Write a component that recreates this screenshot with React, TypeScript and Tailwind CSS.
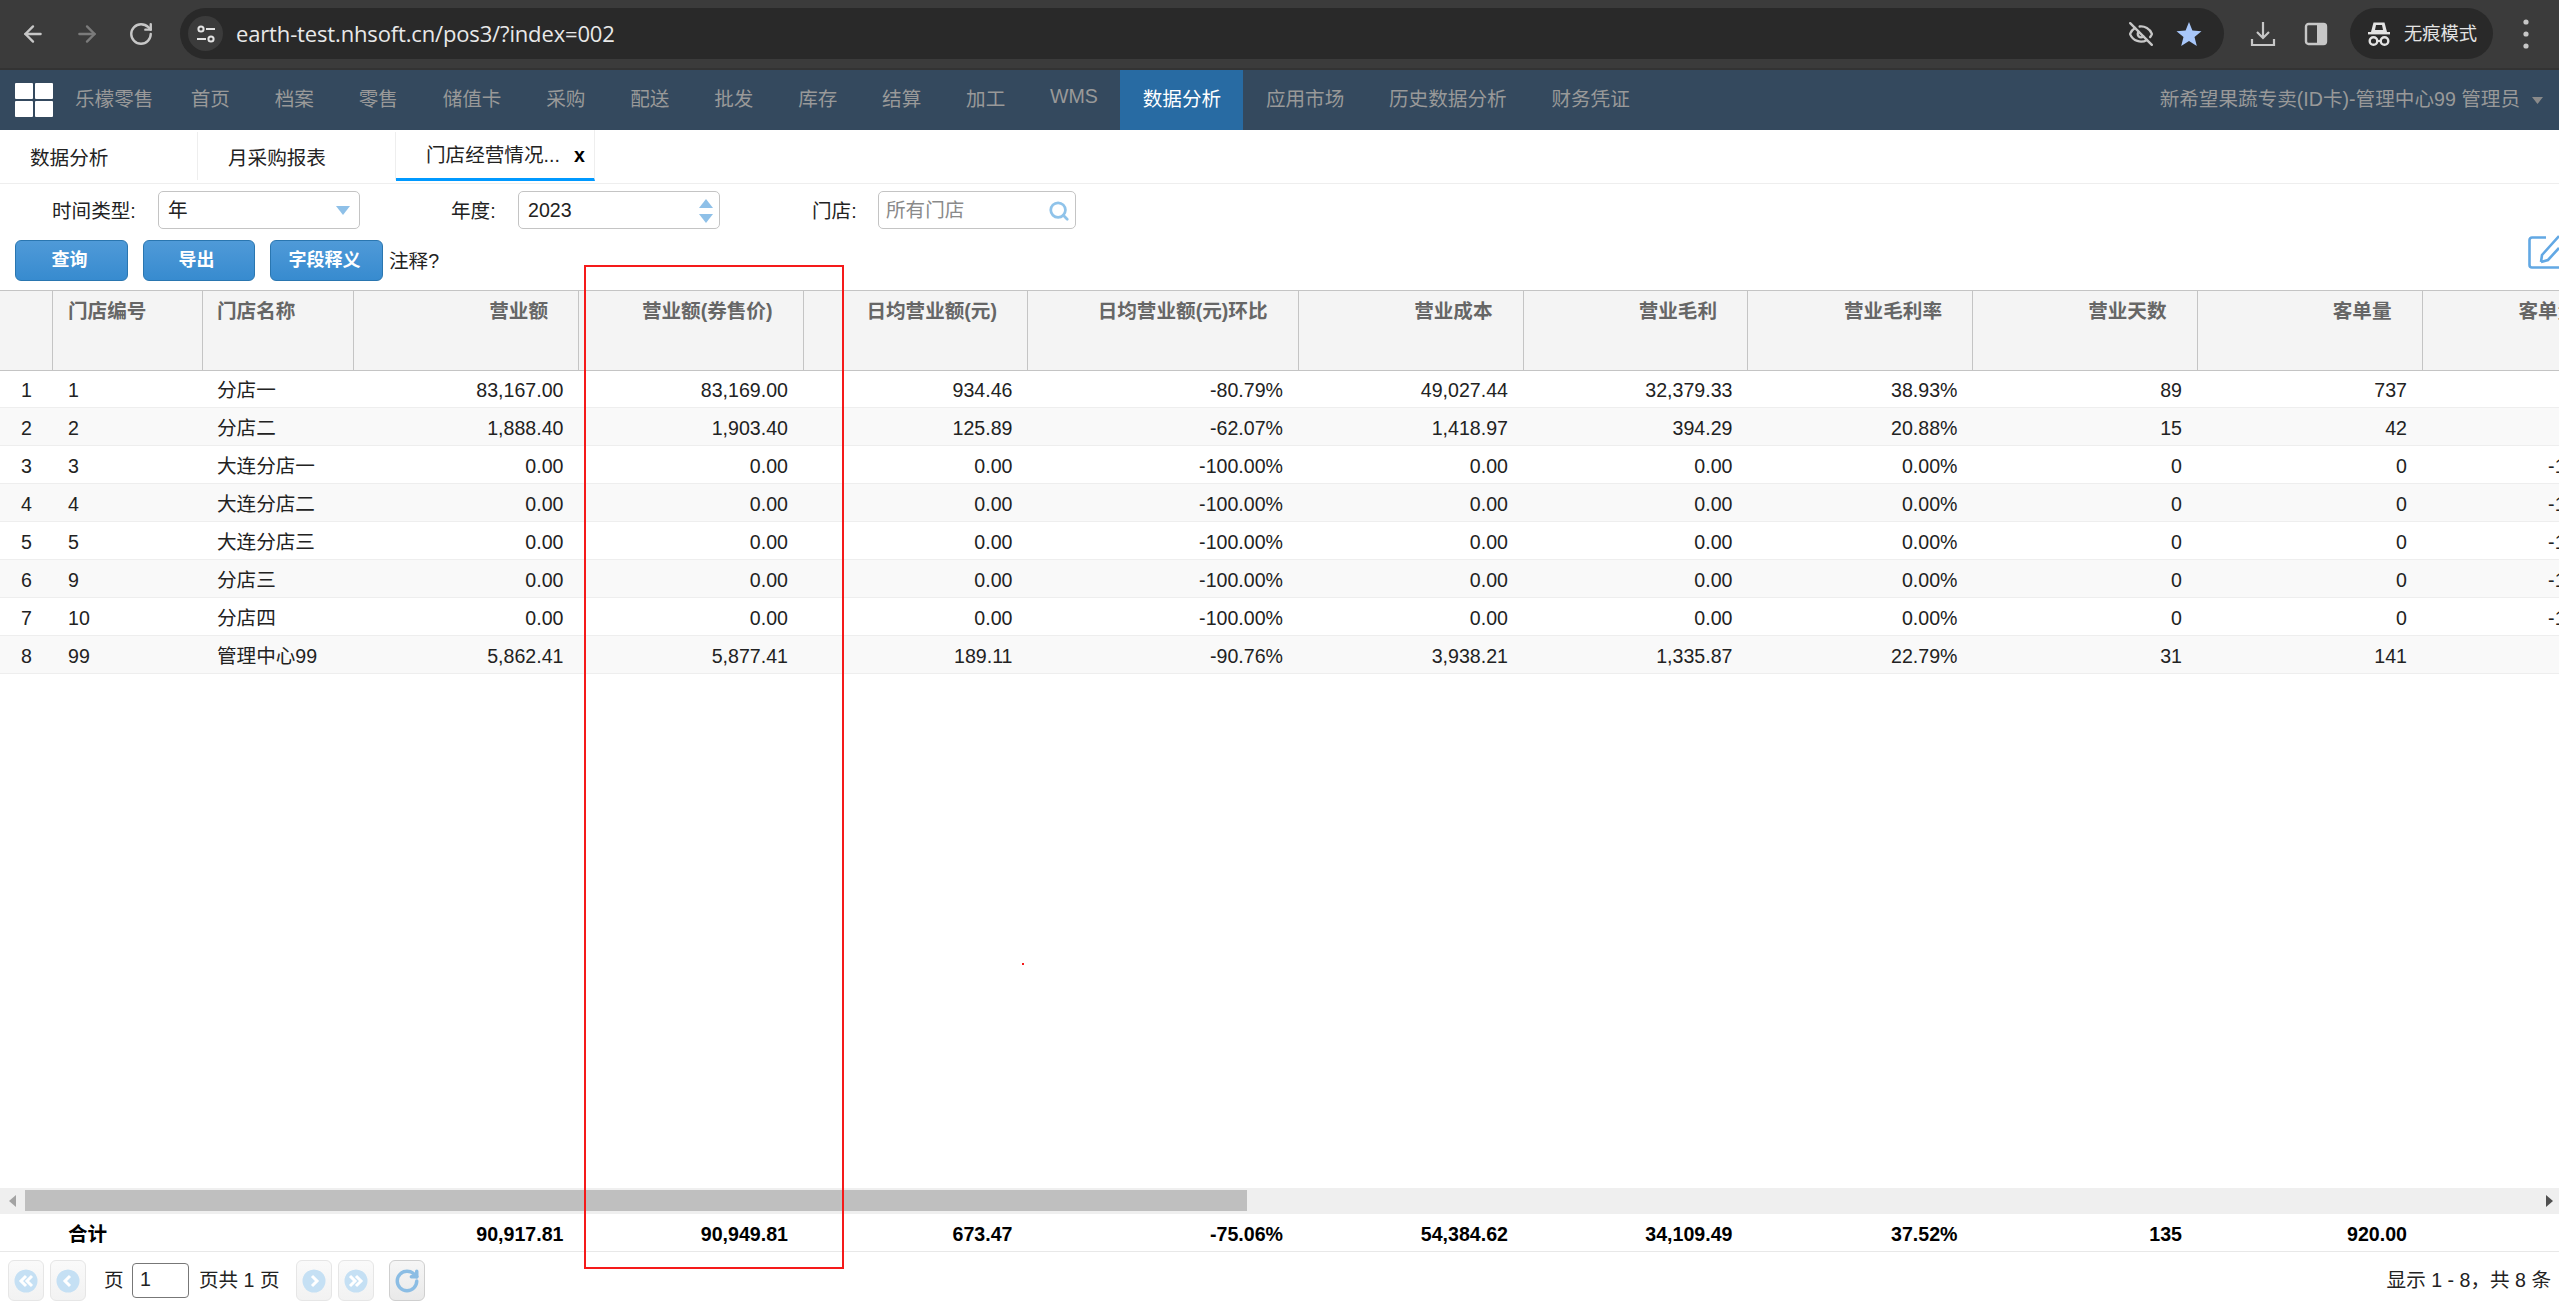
import React from "react";
import { ArrowLeft, ArrowRight, RotateCw, EyeOff, Search } from "lucide-react";

const GRID =
  "grid grid-cols-[53px_150px_151px_225px_224.5px_224.5px_270.5px_225px_224.5px_225px_224.5px_225px_225px] w-max";

const headers = [
  "",
  "门店编号",
  "门店名称",
  "营业额",
  "营业额(券售价)",
  "日均营业额(元)",
  "日均营业额(元)环比",
  "营业成本",
  "营业毛利",
  "营业毛利率",
  "营业天数",
  "客单量",
  "客单量环比",
];

const zero = ["0.00", "0.00", "0.00", "-100.00%", "0.00", "0.00", "0.00%", "0", "0", "-100.00%"];
const rows: string[][] = [
  ["1", "1", "分店一", "83,167.00", "83,169.00", "934.46", "-80.79%", "49,027.44", "32,379.33", "38.93%", "89", "737", "-80.79%"],
  ["2", "2", "分店二", "1,888.40", "1,903.40", "125.89", "-62.07%", "1,418.97", "394.29", "20.88%", "15", "42", "-62.07%"],
  ["3", "3", "大连分店一", ...zero],
  ["4", "4", "大连分店二", ...zero],
  ["5", "5", "大连分店三", ...zero],
  ["6", "9", "分店三", ...zero],
  ["7", "10", "分店四", ...zero],
  ["8", "99", "管理中心99", "5,862.41", "5,877.41", "189.11", "-90.76%", "3,938.21", "1,335.87", "22.79%", "31", "141", "-90.76%"],
];
const totals = ["", "合计", "", "90,917.81", "90,949.81", "673.47", "-75.06%", "54,384.62", "34,109.49", "37.52%", "135", "920.00", ""];

const navItems = ["首页", "档案", "零售", "储值卡", "采购", "配送", "批发", "库存", "结算", "加工"];
const navItems2 = ["应用市场", "历史数据分析", "财务凭证"];

function Cell({ i, children }: { i: number; children: React.ReactNode }) {
  const align = i === 0 ? "pl-[21px]" : i === 1 ? "pl-[15px]" : i === 2 ? "pl-[14px]" : "pr-[15.5px] text-right";
  return <div className={`${align} whitespace-nowrap overflow-hidden`}>{children}</div>;
}

function Tune() {
  return (
    <svg width="20" height="20" viewBox="0 0 20 20" fill="none" stroke="#e3e3e3" strokeWidth="2">
      <circle cx="5" cy="5" r="2.6" />
      <path d="M10 5h9" />
      <path d="M1 15h9" />
      <circle cx="15" cy="15" r="2.6" />
    </svg>
  );
}

function Download() {
  return (
    <svg width="26" height="26" viewBox="0 0 26 26" fill="none" stroke="#c7c7c7" strokeWidth="2.2">
      <path d="M13 1v15M7 11l6 6 6-6" />
      <path d="M2 18v6h22v-6" />
    </svg>
  );
}

function Panel() {
  return (
    <svg width="24" height="24" viewBox="0 0 24 24">
      <rect x="2" y="2" width="20" height="20" rx="2.5" fill="none" stroke="#c7c7c7" strokeWidth="2.4" />
      <rect x="13" y="2" width="9" height="20" fill="#c7c7c7" />
    </svg>
  );
}

function Incognito() {
  return (
    <svg width="24" height="26" viewBox="0 0 24 26" fill="#e3e3e3">
      <path d="M6.5 1.5h11l2.5 9.5H4z" />
      <path d="M9 4h6l1 5H8z" fill="#2a2a2a" />
      <rect x="1" y="11" width="22" height="2.4" />
      <circle cx="6.5" cy="20" r="3.8" fill="none" stroke="#e3e3e3" strokeWidth="2.4" />
      <circle cx="17.5" cy="20" r="3.8" fill="none" stroke="#e3e3e3" strokeWidth="2.4" />
      <path d="M10 19h4v2h-4z" />
    </svg>
  );
}

function Kebab() {
  return (
    <svg width="6" height="34" viewBox="0 0 6 34" fill="#c7c7c7">
      <circle cx="3" cy="5" r="2.6" />
      <circle cx="3" cy="17" r="2.6" />
      <circle cx="3" cy="29" r="2.6" />
    </svg>
  );
}

function StarIcon() {
  return (
    <svg width="26" height="26" viewBox="0 0 26 26" fill="#a8c7fa">
      <path d="M13 1l3.4 8.6 9.1.6-7 5.8 2.3 9L13 20l-7.800 5 2.300-9-7-5.800 9.100-.6z" />
    </svg>
  );
}

function Logo() {
  return (
    <svg width="38" height="34" viewBox="0 0 38 34" fill="#fff">
      <rect x="0" y="0" width="18" height="16" rx="1" />
      <rect x="20" y="0" width="18" height="16" rx="1" />
      <rect x="0" y="18" width="18" height="16" rx="1" />
      <rect x="20" y="18" width="18" height="16" rx="1" />
    </svg>
  );
}

function Tri({ up, className }: { up?: boolean; className: string }) {
  return (
    <svg width="14" height="9" viewBox="0 0 14 9" className={className} fill="currentColor">
      <path d={up ? "M7 0l7 9H0z" : "M0 0h14L7 9z"} />
    </svg>
  );
}

function EditIcon() {
  return (
    <svg width="31" height="37" viewBox="0 0 31 37" fill="none" stroke="#62a8e4" strokeWidth="2.6">
      <path d="M18 3.500H4A2.500 2.500 0 0 0 1.500 6v25A2.500 2.500 0 0 0 4 33.500h27" />
      <path d="M13 28l1-7L31 2M13 28l7-2L31 14" />
    </svg>
  );
}

function PagerBtn({ kind }: { kind: "first" | "prev" | "next" | "last" }) {
  const paths = {
    first: "M12 7l-5 5 5 5M18 7l-5 5 5 5",
    prev: "M14 7l-5 5 5 5",
    next: "M10 7l5 5-5 5",
    last: "M6 7l5 5-5 5M12 7l5 5-5 5",
  };
  return (
    <div className="w-[36px] h-[41px] rounded-[6px] border border-[#e6e6e6] bg-gradient-to-b from-[#fafafa] to-[#f2f2f2] flex items-center justify-center">
      <svg width="24" height="24" viewBox="0 0 24 24">
        <circle cx="12" cy="12" r="11.500" fill="#c5e0f4" />
        <path d={paths[kind]} fill="none" stroke="#fff" strokeWidth="3" />
      </svg>
    </div>
  );
}

export default function App() {
  return (
    <div className="relative w-[2559px] h-[1306px] overflow-hidden bg-white flex flex-col text-[19.6px] text-[#222] font-['Liberation_Sans','Noto_Sans_CJK_SC',sans-serif]">
      {/* Browser toolbar */}
      <div className="h-[70px] shrink-0 bg-[#3b3b3b] border-b-[2px] border-[#333] flex items-start pt-[8px] pl-[20px] pr-[28px]">
        <div className="h-[51px] flex items-center gap-[28px]">
          <ArrowLeft size={26} color="#c7c7c7" strokeWidth={2.2} />
          <ArrowRight size={26} color="#7b7b7b" strokeWidth={2.2} />
          <RotateCw size={26} color="#c7c7c7" strokeWidth={2.2} />
        </div>
        <div className="ml-[26px] w-[2044px] h-[51px] rounded-full bg-[#292929] flex items-center pl-[8px] pr-[22px]">
          <div className="w-[35px] h-[35px] rounded-full bg-[#3b3b3b] flex items-center justify-center">
            <Tune />
          </div>
          <span className="ml-[13px] text-[22px] text-[#e8e8e8] font-['Open_Sans',sans-serif] tracking-[-0.15px]">
            earth-test.nhsoft.cn/pos3/?index=002
          </span>
          <div className="ml-auto flex items-center gap-[22px]">
            <EyeOff size={26} color="#c7c7c7" strokeWidth={2.2} />
            <StarIcon />
          </div>
        </div>
        <div className="h-[51px] flex items-center ml-[26px] gap-[28px]">
          <Download />
          <Panel />
        </div>
        <div className="ml-[22px] w-[143px] h-[51px] rounded-full bg-[#292929] flex items-center pl-[17px]">
          <Incognito />
          <span className="ml-[13px] text-[18.3px] text-[#e3e3e3] whitespace-nowrap">无痕模式</span>
        </div>
        <div className="h-[51px] flex items-center ml-[30px]">
          <Kebab />
        </div>
      </div>

      {/* App nav */}
      <div className="h-[60px] shrink-0 bg-[#34495e] flex items-stretch text-[#999] whitespace-nowrap">
        <div className="flex items-center pl-[15px]">
          <Logo />
          <span className="ml-[22px] mr-[15px]">乐檬零售</span>
        </div>
        {navItems.map((n) => (
          <div key={n} className="flex items-center px-[22.4px]">
            {n}
          </div>
        ))}
        <div className="flex items-center px-[22.4px] pb-[6px]">WMS</div>
        <div className="flex items-center px-[22.4px] bg-[#286ba3] text-white">数据分析</div>
        {navItems2.map((n) => (
          <div key={n} className="flex items-center px-[22.4px]">
            {n}
          </div>
        ))}
        <div className="ml-auto flex items-center pr-[16px]">
          <span>新希望果蔬专卖(ID卡)-管理中心99 管理员</span>
          <Tri className="ml-[12px] text-[#8a8a8a] w-[11px]" />
        </div>
      </div>

      {/* Tabs */}
      <div className="h-[54px] shrink-0 border-b border-[#eeeeee] flex items-start">
        <div className="w-[198px] h-[48px] mt-[2px] flex items-center pl-[30px] pt-[6px] border-r border-[#eeeeee]">数据分析</div>
        <div className="w-[198px] h-[48px] mt-[2px] flex items-center pl-[30px] pt-[6px] border-r border-[#eeeeee]">月采购报表</div>
        <div className="w-[199px] h-[51px] flex items-center pl-[30px] pt-[3px] border-r border-[#eeeeee] border-b-[3px] border-b-[#0099ff] whitespace-nowrap">
          门店经营情况...
          <span className="ml-[14px] font-bold text-black">x</span>
        </div>
      </div>

      {/* Filter */}
      <div className="h-[106px] shrink-0 flex flex-col pt-[7px]">
        <div className="flex items-center h-[38px]">
          <span className="ml-[52px] w-[106px] pt-[3px]">时间类型:</span>
          <div className="w-[202px] h-[38px] rounded-[5px] border border-[#c4c4c4] flex items-center pl-[9px] pr-[9px] justify-between pt-[1px]">
            年
            <Tri className="text-[#8ec0e8]" />
          </div>
          <span className="ml-[91px] w-[67px] pt-[3px]">年度:</span>
          <div className="w-[202px] h-[38px] rounded-[5px] border border-[#c4c4c4] flex items-center pl-[9px] pr-[6px] justify-between pt-[1px]">
            2023
            <div className="flex flex-col gap-[6px]">
              <Tri up className="text-[#8ec0e8]" />
              <Tri className="text-[#8ec0e8]" />
            </div>
          </div>
          <span className="ml-[92px] w-[67px] pt-[3px]">门店:</span>
          <div className="-ml-[1px] w-[198px] h-[38px] rounded-[5px] border border-[#c4c4c4] flex items-center pl-[7px] pr-[5px] justify-between text-[#8a8a8a] pt-[1px]">
            所有门店
            <Search size={22} color="#8fc3ea" strokeWidth={3} />
          </div>
        </div>
        <div className="flex items-center mt-[11px] pl-[15px]">
          <div className="w-[113px] h-[41px] pr-[4px] rounded-[6px] border border-[#2a76b0] bg-gradient-to-b from-[#4f9ad8] to-[#378bcf] text-white text-[18px] font-bold flex items-center justify-center">查询</div>
          <div className="ml-[15px] w-[112px] h-[41px] pr-[5px] rounded-[6px] border border-[#2a76b0] bg-gradient-to-b from-[#4f9ad8] to-[#378bcf] text-white text-[18px] font-bold flex items-center justify-center">导出</div>
          <div className="ml-[15px] w-[113px] h-[41px] pr-[4px] rounded-[6px] border border-[#2a76b0] bg-gradient-to-b from-[#4f9ad8] to-[#378bcf] text-white text-[18px] font-bold flex items-center justify-center">字段释义</div>
          <span className="ml-[6px] pt-[3px]">注释?</span>
          <div className="ml-auto self-start -mt-[6px] h-[37px]">
            <EditIcon />
          </div>
        </div>
      </div>

      {/* Table */}
      <div className="flex-1 min-h-0 flex flex-col overflow-hidden">
        <div className={`${GRID} h-[81px] shrink-0 bg-[#f4f4f4] border-y border-[#c4c4c4] font-bold text-[#666]`}>
          {headers.map((h, i) => (
            <div
              key={i}
              className={`border-r border-[#c4c4c4] pt-[6px] whitespace-nowrap ${i === 2 ? "pl-[14px]" : i < 3 ? "pl-[15px]" : "pr-[30px] text-right"}`}
            >
              {h}
            </div>
          ))}
        </div>
        {rows.map((r, ri) => (
          <div
            key={ri}
            className={`${GRID} ${ri === 0 ? "h-[37px] pt-[4px]" : "h-[38px] pt-[5px]"} shrink-0 items-center border-b border-[#eeeeee] ${ri % 2 ? "bg-[#f9f9f9]" : "bg-white"}`}
          >
            {r.map((c, i) => (
              <Cell key={i} i={i}>
                {c}
              </Cell>
            ))}
          </div>
        ))}
        <div className="flex-1" />
        {/* Scrollbar */}
        <div className="h-[26px] shrink-0 bg-[#efefef] flex items-start pt-[2px]">
          <div className="w-[25px] h-[21px] flex items-center justify-center">
            <svg width="7" height="12" viewBox="0 0 7 12" fill="#a3a3a3">
              <path d="M7 0v12L0 6z" />
            </svg>
          </div>
          <div className="w-[1222px] h-[21px] bg-[#bfbfbf]" />
          <div className="ml-auto w-[20px] h-[21px] flex items-center justify-center">
            <svg width="7" height="12" viewBox="0 0 7 12" fill="#505050">
              <path d="M0 0v12l7-6z" />
            </svg>
          </div>
        </div>
        {/* Totals */}
        <div className={`${GRID} h-[38px] pt-[5px] shrink-0 items-center border-b border-[#e8e8e8] font-bold text-black`}>
          {totals.map((c, i) => (
            <Cell key={i} i={i}>
              {c}
            </Cell>
          ))}
        </div>
      </div>

      {/* Pager */}
      <div className="h-[54px] shrink-0 flex items-center pl-[8px] pr-[8px] pt-[3px]">
        <PagerBtn kind="first" />
        <div className="ml-[6px]">
          <PagerBtn kind="prev" />
        </div>
        <span className="ml-[18px]">页</span>
        <div className="ml-[8.4px] w-[57px] h-[35px] rounded-[4px] border border-[#777] flex items-center pl-[7px] pb-[1px]">1</div>
        <span className="ml-[10px] whitespace-pre">页共 1 页</span>
        <div className="ml-[16.4px]">
          <PagerBtn kind="next" />
        </div>
        <div className="ml-[6px]">
          <PagerBtn kind="last" />
        </div>
        <div className="ml-[15px] w-[36px] h-[41px] rounded-[6px] border border-[#cfcfcf] bg-gradient-to-b from-[#f6f6f6] to-[#e9e9e9] flex items-center justify-center">
          <RotateCw size={26} color="#8bbde4" strokeWidth={3.2} />
        </div>
        <span className="ml-auto whitespace-pre">显示 1 - 8，共 8 条</span>
      </div>

      {/* Red annotation drawn over the screenshot */}
      <div className="absolute left-[584px] top-[265px] w-[260px] h-[1004px] border-[2px] border-[#f51a1a]" />
      <div className="absolute left-[1022px] top-[963px] w-[2px] h-[2px] bg-[#f51a1a]" />
    </div>
  );
}
